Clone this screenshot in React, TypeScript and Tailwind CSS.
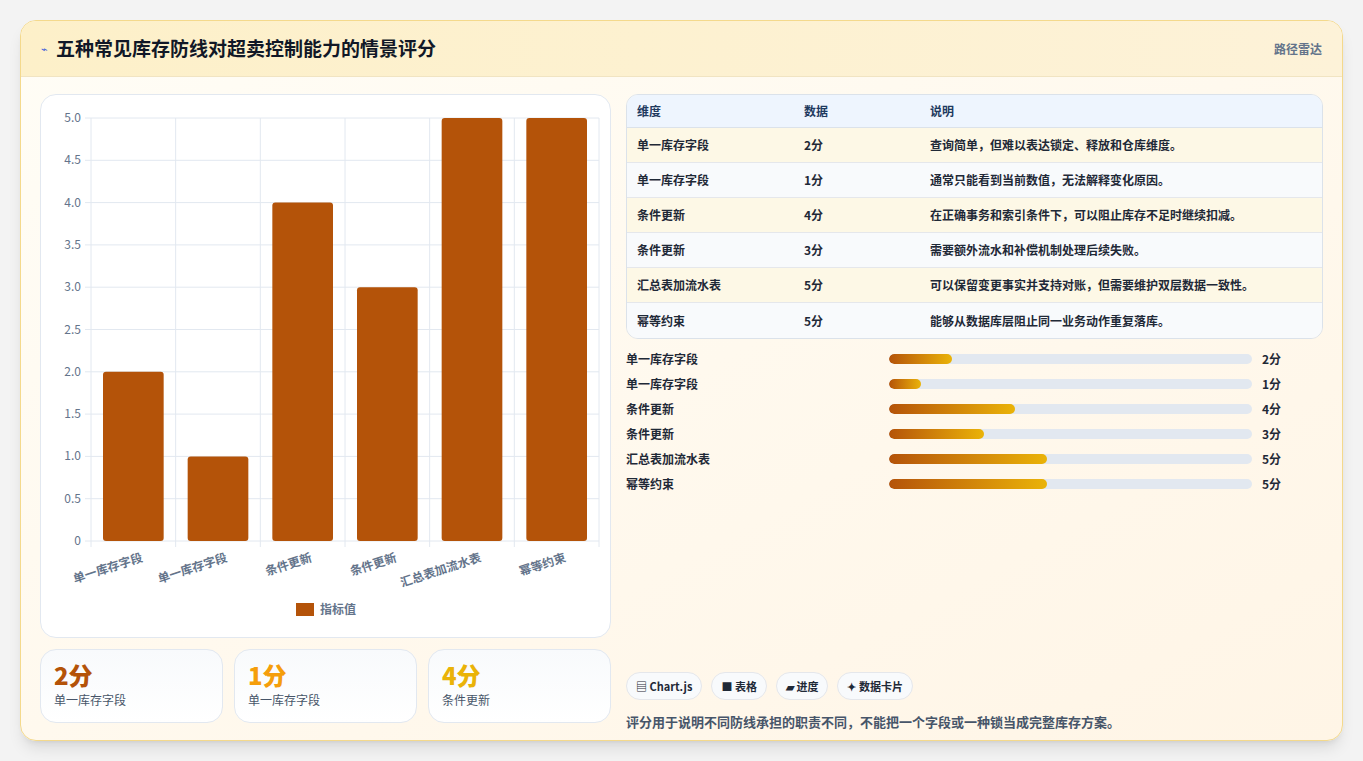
import React from "react";

const rows = [
  { name: "单一库存字段", v: 2, note: "查询简单，但难以表达锁定、释放和仓库维度。" },
  { name: "单一库存字段", v: 1, note: "通常只能看到当前数值，无法解释变化原因。" },
  { name: "条件更新", v: 4, note: "在正确事务和索引条件下，可以阻止库存不足时继续扣减。" },
  { name: "条件更新", v: 3, note: "需要额外流水和补偿机制处理后续失败。" },
  { name: "汇总表加流水表", v: 5, note: "可以保留变更事实并支持对账，但需要维护双层数据一致性。" },
  { name: "幂等约束", v: 5, note: "能够从数据库层阻止同一业务动作重复落库。" },
];

const font = '"Noto Sans CJK SC", "Noto Sans", sans-serif';

function Chart() {
  const left = 50, right = 558, top = 23, bottom = 446;
  const h = bottom - top;
  const cw = (right - left) / 6;
  const ticks = [0, 0.5, 1, 1.5, 2, 2.5, 3, 3.5, 4, 4.5, 5];
  return (
    <svg width="570" height="543" style={{ fontFamily: font }}>
      {ticks.map((t) => {
        const y = bottom - (t / 5) * h;
        return (
          <g key={t}>
            <line x1={left - 6} x2={right} y1={y} y2={y} stroke="#e2e8f0" />
            <text x={left - 10} y={y + 4} fontSize="12" fill="#64748b" textAnchor="end">
              {t === 0 ? "0" : t.toFixed(1)}
            </text>
          </g>
        );
      })}
      {Array.from({ length: 7 }).map((_, i) => (
        <line key={i} x1={left + i * cw} x2={left + i * cw} y1={top} y2={bottom + 6} stroke="#e2e8f0" />
      ))}
      {rows.map((r, i) => {
        const bh = (r.v / 5) * h;
        const x = left + i * cw + 12;
        return (
          <g key={i}>
            <rect x={x} y={bottom - bh} width={cw - 24} height={bh} rx="3" fill="#b45309" />
            <text
              x={left + i * cw + cw / 2 + 10}
              y={bottom + 20}
              fontSize="12"
              fontWeight="600"
              fill="#64748b"
              textAnchor="end"
              transform={`rotate(-18 ${left + i * cw + cw / 2 + 10} ${bottom + 20})`}
            >
              {r.name}
            </text>
          </g>
        );
      })}
      <rect x="255" y="508" width="18" height="13" fill="#b45309" />
      <text x="279" y="519" fontSize="12" fill="#64748b" fontWeight="600">指标值</text>
    </svg>
  );
}

export default function App() {
  return (
    <div className="w-[1363px] h-[761px] bg-[#f3f3f3] p-5" style={{ fontFamily: font }}>
      <div className="h-[721px] rounded-2xl border border-[#f4d98c] bg-gradient-to-br from-[#fffdf6] to-[#fff5e6] overflow-hidden shadow-lg flex flex-col">
        <div className="h-[56px] bg-gradient-to-r from-[#fdf0c9] to-[#fdf2d8] border-b border-[#f1e4c2] flex items-center justify-between px-5">
          <div className="flex items-center gap-2">
            <span className="text-[#3b5bdb] text-[11px]">⌁</span>
            <span className="text-[19px] font-bold text-[#111827]">五种常见库存防线对超卖控制能力的情景评分</span>
          </div>
          <span className="text-[12px] text-[#64748b] font-semibold">路径雷达</span>
        </div>
        <div className="flex gap-[15px] px-[19px] pt-[17px]">
          <div className="w-[571px] flex flex-col gap-[11px]">
            <div className="h-[544px] bg-white rounded-2xl border border-[#e2e8f0]">
              <Chart />
            </div>
            <div className="grid grid-cols-3 gap-[11px]">
              {[
                { v: "2分", c: "text-[#b45309]", l: "单一库存字段" },
                { v: "1分", c: "text-[#f59e0b]", l: "单一库存字段" },
                { v: "4分", c: "text-[#eab308]", l: "条件更新" },
              ].map((s, i) => (
                <div key={i} className="h-[74px] rounded-2xl border border-[#e2e8f0] bg-gradient-to-b from-[#f8fafc] to-white px-[13px] pt-[10px]">
                  <div className={`text-[24px] font-extrabold leading-[30px] ${s.c}`}>{s.v}</div>
                  <div className="text-[12px] text-[#475569] mt-[1px]">{s.l}</div>
                </div>
              ))}
            </div>
          </div>
          <div className="flex-1 flex flex-col">
            <div className="rounded-xl border border-[#dbe2ea] overflow-hidden text-[12px]">
              <div className="h-[33px] bg-[#eef5fe] flex items-center font-bold text-[#1e3a5f] border-b border-[#dbe2ea]">
                <span className="w-[177px] pl-[10px]">维度</span>
                <span className="w-[126px]">数据</span>
                <span>说明</span>
              </div>
              {rows.map((r, i) => (
                <div key={i} className={`h-[35px] flex items-center text-[#1f2937] font-semibold ${i < 5 ? "border-b border-[#e5e7eb]" : ""} ${i % 2 === 0 ? "bg-[#fdf8e6]" : "bg-[#f8fafc]"}`}>
                  <span className="w-[177px] pl-[10px]">{r.name}</span>
                  <span className="w-[126px]">{r.v}分</span>
                  <span>{r.note}</span>
                </div>
              ))}
            </div>
            <div className="mt-[12px] flex flex-col gap-[9px]">
              {rows.map((r, i) => (
                <div key={i} className="h-[16px] flex items-center text-[12px] font-semibold text-[#1f2937]">
                  <span className="w-[263px]">{r.name}</span>
                  <div className="w-[363px] h-[10px] rounded-full bg-[#e2e8f0] overflow-hidden">
                    <div className="h-full rounded-full bg-gradient-to-r from-[#b45309] to-[#eab308]" style={{ width: r.v * 31.6 }} />
                  </div>
                  <span className="ml-[10px]">{r.v}分</span>
                </div>
              ))}
            </div>
            <div className="mt-[180px] flex gap-[9px] text-[11px] font-bold text-[#1f2937]">
              {["▤ Chart.js", "■ 表格", "▰ 进度", "✦ 数据卡片"].map((c) => (
                <span key={c} className="h-[28px] px-[9px] rounded-full border border-[#e5e7eb] bg-[#f8fafc] flex items-center">{c}</span>
              ))}
            </div>
            <div className="mt-[12px] text-[13px] text-[#475569] font-semibold">评分用于说明不同防线承担的职责不同，不能把一个字段或一种锁当成完整库存方案。</div>
          </div>
        </div>
      </div>
    </div>
  );
}
